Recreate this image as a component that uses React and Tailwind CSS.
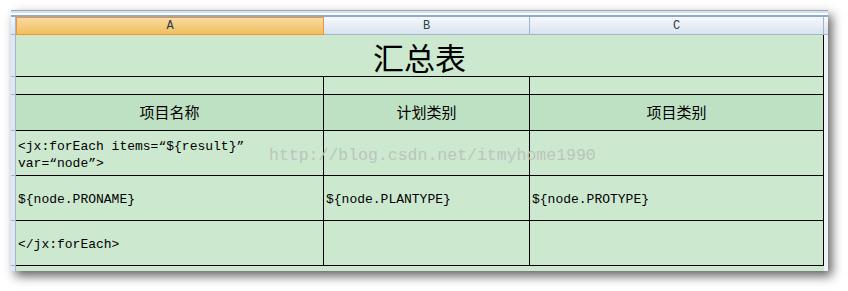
import React from "react";

const mono = { fontFamily: '"Liberation Mono", "Noto Sans CJK SC", monospace' };
const cjk = { fontFamily: '"Noto Sans CJK SC", sans-serif' };

// the row-number gutter, collapsed to a thin strip
const Gutter = () => (
  <div className="w-[5px] shrink-0 bg-[#dfe7f2] border-r border-b border-[#9eb6ce]" />
);

const Row = ({ h, cells, header }) => (
  <div className="flex" style={{ height: h }}>
    <Gutter />
    {cells.map((c, i) => (
      <div
        key={i}
        className={`${["w-[308px]", "w-[206px]", "w-[294px]"][i]} shrink-0 border-r border-b border-black flex items-center ${
          header ? "bg-[#bfe1c3] justify-center" : "bg-[#cce8cf] pl-[2px] pt-[4px]"
        }`}
      >
        {c}
      </div>
    ))}
    <div className="flex-1 bg-[#eef2f7]" />
  </div>
);

const App = () => {
  return (
    <div className="w-[848px] h-[291px] bg-white pl-[11px] pt-[10px]">
      <div className="relative w-[817px] h-[261px] bg-[#eef2f7] shadow-[4px_5px_10px_rgba(0,0,0,0.62)] flex flex-col">
        {/* window frame */}
        <div className="h-[1px] bg-[#9aa8b8]" />
        <div className="h-[2px] bg-[#d3e0f0]" />
        <div className="h-[2px] bg-[#fafcff]" />
        <div className="h-[2px] bg-[#8eaacb]" />

        {/* column letters */}
        <div
          className="flex h-[18px] border-b border-[#9eb6ce] bg-gradient-to-b from-[#f6f9fc] to-[#d9e2ee] text-[12px] text-[#25404a]"
          style={mono}
        >
          <div className="w-[5px] shrink-0 border-r border-[#9eb6ce]" />
          <div className="w-[308px] h-[18px] shrink-0 border border-[#f29436] bg-gradient-to-b from-[#f9d99f] to-[#f1c05d] flex items-center justify-center">
            A
          </div>
          <div className="w-[206px] shrink-0 border-r border-[#9eb6ce] flex items-center justify-center">
            B
          </div>
          <div className="w-[294px] shrink-0 border-r border-[#9eb6ce] flex items-center justify-center">
            C
          </div>
        </div>

        {/* merged title */}
        <div className="flex h-[42px]">
          <Gutter />
          <div
            className="w-[808px] shrink-0 bg-[#cce8cf] border-r border-b border-black flex items-center justify-center pt-[3px] text-[31px] text-black"
            style={cjk}
          >
            汇总表
          </div>
          <div className="flex-1 bg-[#eef2f7]" />
        </div>

        <Row h={18} cells={["", "", ""]} />
        <Row
          h={36}
          header
          cells={[
            <span key="a" className="text-[15px] text-black" style={cjk}>项目名称</span>,
            <span key="b" className="text-[15px] text-black" style={cjk}>计划类别</span>,
            <span key="c" className="text-[15px] text-black" style={cjk}>项目类别</span>,
          ]}
        />
        <Row
          h={45}
          cells={[
            <span key="a" className="text-[13px] leading-[17px] text-black" style={mono}>
              {"<jx:forEach items=“${result}”"}
              <br />
              {"var=“node”>"}
            </span>,
            "",
            "",
          ]}
        />
        <Row
          h={45}
          cells={[
            <span key="a" className="text-[13px] text-black" style={mono}>{"${node.PRONAME}"}</span>,
            <span key="b" className="text-[13px] text-black" style={mono}>{"${node.PLANTYPE}"}</span>,
            <span key="c" className="text-[13px] text-black" style={mono}>{"${node.PROTYPE}"}</span>,
          ]}
        />
        <Row
          h={45}
          cells={[
            <span key="a" className="text-[13px] text-black" style={mono}>{"</jx:forEach>"}</span>,
            "",
            "",
          ]}
        />

        {/* strip of sheet below the last row */}
        <div className="flex flex-1">
          <div className="w-[5px] shrink-0 bg-[#dfe7f2] border-r border-[#9eb6ce]" />
          <div className="w-[808px] shrink-0 bg-[#cce8cf]" />
          <div className="flex-1" />
        </div>

        {/* blog watermark */}
        <div
          className="absolute left-[258px] top-[134px] text-[16.5px] text-[#bac6bb] pointer-events-none whitespace-nowrap"
          style={mono}
        >
          http://blog.csdn.net/itmyhome1990
        </div>
      </div>
    </div>
  );
};

export default App;
